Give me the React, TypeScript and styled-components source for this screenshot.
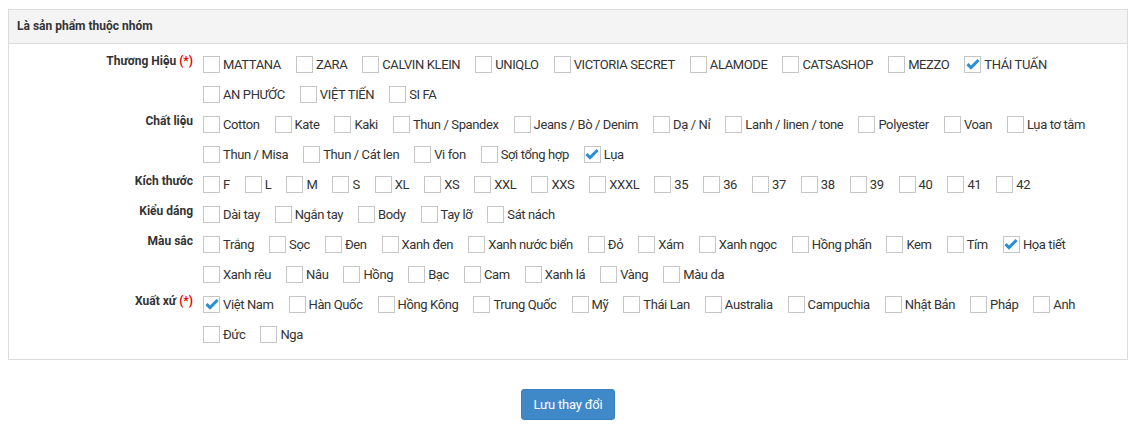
import React, { useState } from "react";
import styled, { createGlobalStyle } from "styled-components";

const GlobalStyle = createGlobalStyle`
  html, body {
    margin: 0;
    padding: 0;
    background: #fff;
    font-family: Roboto, "Liberation Sans", Arial, sans-serif;
    color: #333;
  }
`;

type Group = { label: string; required?: boolean; options: string[]; checked: string[] };

const groups: Group[] = [
  {
    label: "Thương Hiệu",
    required: true,
    options: [
      "MATTANA", "ZARA", "CALVIN KLEIN", "UNIQLO", "VICTORIA SECRET", "ALAMODE",
      "CATSASHOP", "MEZZO", "THÁI TUẤN", "AN PHƯỚC", "VIỆT TIẾN", "SI FA",
    ],
    checked: ["THÁI TUẤN"],
  },
  {
    label: "Chất liệu",
    options: [
      "Cotton", "Kate", "Kaki", "Thun / Spandex", "Jeans / Bò / Denim", "Dạ / Nỉ",
      "Lanh / linen / tone", "Polyester", "Voan", "Lụa tơ tằm", "Thun / Misa",
      "Thun / Cát len", "Vi fon", "Sợi tổng hợp", "Lụa",
    ],
    checked: ["Lụa"],
  },
  {
    label: "Kích thước",
    options: ["F", "L", "M", "S", "XL", "XS", "XXL", "XXS", "XXXL", "35", "36", "37", "38", "39", "40", "41", "42"],
    checked: [],
  },
  {
    label: "Kiểu dáng",
    options: ["Dài tay", "Ngắn tay", "Body", "Tay lỡ", "Sát nách"],
    checked: [],
  },
  {
    label: "Màu sắc",
    options: [
      "Trắng", "Sọc", "Đen", "Xanh đen", "Xanh nước biển", "Đỏ", "Xám", "Xanh ngọc",
      "Hồng phấn", "Kem", "Tím", "Họa tiết", "Xanh rêu", "Nâu", "Hồng", "Bạc", "Cam",
      "Xanh lá", "Vàng", "Màu da",
    ],
    checked: ["Họa tiết"],
  },
  {
    label: "Xuất xứ",
    required: true,
    options: [
      "Việt Nam", "Hàn Quốc", "Hồng Kông", "Trung Quốc", "Mỹ", "Thái Lan", "Australia",
      "Campuchia", "Nhật Bản", "Pháp", "Anh", "Đức", "Nga",
    ],
    checked: ["Việt Nam"],
  },
];

function CheckItem(props: { text: string; initial: boolean }) {
  const [on, setOn] = useState(props.initial);
  return (
    <Option onClick={() => setOn(!on)}>
      <Box>
        {on && (
          <svg width="14" height="12" viewBox="0 0 14 12">
            <path d="M1.5 6.2 L5 9.6 L12.6 2" fill="none" stroke="#2b8fd3" strokeWidth="3" />
          </svg>
        )}
      </Box>
      <OptionText>{props.text}</OptionText>
    </Option>
  );
}

export default function App() {
  return (
    <Page>
      <GlobalStyle />
      <Panel>
        <PanelHeader>Là sản phẩm thuộc nhóm</PanelHeader>
        <PanelBody>
          {groups.map((g) => (
            <Row key={g.label}>
              <Label>
                {g.label}
                {g.required && <Required> (*)</Required>}
              </Label>
              <Options>
                {g.options.map((o) => (
                  <CheckItem key={o} text={o} initial={g.checked.includes(o)} />
                ))}
              </Options>
            </Row>
          ))}
        </PanelBody>
      </Panel>
      <Actions>
        <SaveButton>Lưu thay đổi</SaveButton>
      </Actions>
    </Page>
  );
}

const Page = styled.div`
  padding: 9px 12px 0 8px;
  width: 1120px;
`;

const Panel = styled.div`
  border: 1px solid #dcdcdc;
  background: #fff;
`;

const PanelHeader = styled.div`
  height: 33px;
  line-height: 32px;
  padding-left: 8px;
  background: #f4f4f4;
  border-bottom: 1px solid #dcdcdc;
  font-size: 12px;
  font-weight: bold;
  color: #333;
`;

const PanelBody = styled.div`
  padding: 5px 10px 10px 0;
`;

const Row = styled.div`
  display: grid;
  grid-template-columns: 184px 1fr;
  column-gap: 10px;
`;

const Label = styled.div`
  text-align: right;
  font-size: 12px;
  font-weight: bold;
  line-height: 16px;
  padding-top: 4px;
  color: #333;
`;

const Required = styled.span`
  color: #e00;
`;

const Options = styled.div`
  display: flex;
  flex-wrap: wrap;
`;

const Option = styled.label`
  display: flex;
  align-items: center;
  height: 30px;
  margin-right: 15px;
  cursor: pointer;
`;

const Box = styled.span`
  box-sizing: border-box;
  width: 17px;
  height: 17px;
  border: 1px solid #c6c6c6;
  background: #fff;
  display: flex;
  align-items: center;
  justify-content: center;
  margin-right: 3px;
`;

const OptionText = styled.span`
  font-size: 13px;
  letter-spacing: -0.38px;
  color: #333;
`;

const Actions = styled.div`
  display: flex;
  justify-content: center;
  padding-top: 29px;
`;

const SaveButton = styled.button`
  background: #3f89c9;
  border: 1px solid #3a80bd;
  border-radius: 3px;
  color: #fff;
  font-family: Roboto, "Liberation Sans", Arial, sans-serif;
  font-size: 13px;
  letter-spacing: -0.2px;
  height: 31px;
  padding: 0 12px;
  cursor: pointer;
`;
